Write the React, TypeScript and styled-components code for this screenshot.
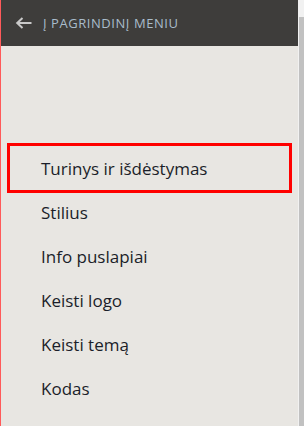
import React from 'react';
import styled, { createGlobalStyle } from 'styled-components';

const GlobalStyle = createGlobalStyle`
  html, body {
    margin: 0;
    padding: 0;
    height: 100%;
    overflow: hidden;
  }
  body {
    font-family: 'Open Sans', 'Liberation Sans', sans-serif;
  }
  #root {
    height: 100%;
  }
`;

const Screen = styled.div`
  display: flex;
  height: 100vh;
  background: #f1f1f1;
`;

const Panel = styled.div`
  flex: 1;
  display: flex;
  flex-direction: column;
  background: #e8e6e2;
  border-left: 1px solid #ff5a5a;
`;

const Header = styled.div`
  height: 46px;
  display: flex;
  align-items: center;
  gap: 11px;
  padding-left: 14px;
  background: #3e3d3b;
  cursor: pointer;
`;

const BackLabel = styled.span`
  font-size: 13px;
  color: #a9bccb;
  text-transform: uppercase;
  letter-spacing: 0.55px;
`;

const Menu = styled.ul`
  list-style: none;
  margin: 100px 0 0;
  padding: 0 9px 0 9px;
`;

const MenuItem = styled.li<{ $active?: boolean }>`
  height: 44px;
  display: flex;
  align-items: center;
  padding-left: 31px;
  font-size: 17px;
  color: #1b1e29;
  outline: ${(p) => (p.$active ? '3px solid #ff0000' : 'none')};
`;

const ScrollTrack = styled.div`
  width: 5px;
  display: flex;
  padding: 17px 0 0 1px;
  background: #f1f1f1;
`;

const ScrollThumb = styled.div`
  flex: 1;
  background: #c1c1c1;
`;

const BackArrow = () => (
  <svg width="17" height="12" viewBox="0 0 17 12" fill="none">
    <path d="M16.5 6H2.5M7.5 1L2.2 6l5.3 5" stroke="#c9c9c9" strokeWidth="2" />
  </svg>
);

const items = ['Turinys ir išdėstymas', 'Stilius', 'Info puslapiai', 'Keisti logo', 'Keisti temą', 'Kodas'];

export default function App() {
  return (
    <>
      <GlobalStyle />
      <Screen>
        <Panel>
          <Header>
            <BackArrow />
            <BackLabel>Į pagrindinį meniu</BackLabel>
          </Header>
          <Menu>
            {items.map((item, i) => (
              <MenuItem key={item} $active={i === 0}>
                {item}
              </MenuItem>
            ))}
          </Menu>
        </Panel>
        <ScrollTrack>
          <ScrollThumb />
        </ScrollTrack>
      </Screen>
    </>
  );
}
